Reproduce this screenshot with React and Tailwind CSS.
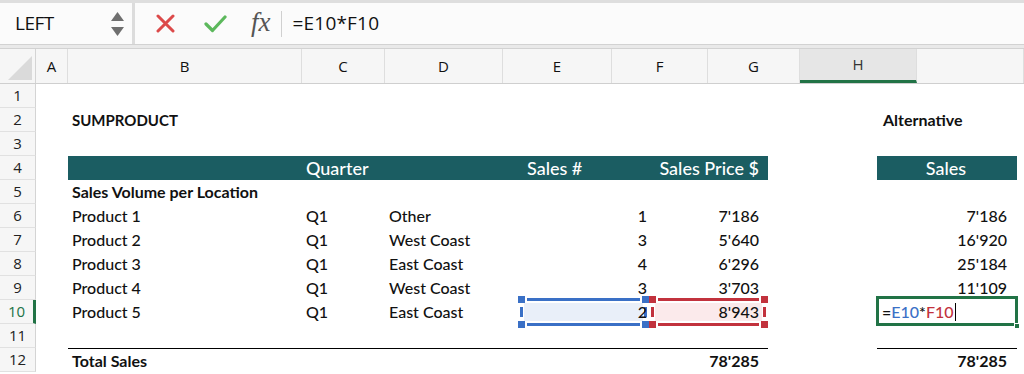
import React from 'react';

// column widths in the header strip (letters) and in the sheet body
const HEAD_COLS = [
  { id: 'A', w: 32 },
  { id: 'B', w: 234 },
  { id: 'C', w: 83 },
  { id: 'D', w: 118 },
  { id: 'E', w: 109 },
  { id: 'F', w: 96 },
  { id: 'G', w: 92 },
  { id: 'H', w: 117, active: true },
  { id: '', w: 107 },
];

const W = { A: 32, B: 234, C: 83, D: 133, E: 131, F: 119, G: 109, H: 140 };

const ROWS = [
  { n: 1 },
  { n: 2, B: { t: 'SUMPRODUCT', bold: true, cls: 'text-[15px]' }, alt: 'Alternative' },
  { n: 3 },
  { n: 4, header: true },
  { n: 5, B: { t: 'Sales Volume per Location', bold: true } },
  { n: 6, B: { t: 'Product 1' }, C: 'Q1', D: 'Other', E: '1', F: "7'186", H: "7'186" },
  { n: 7, B: { t: 'Product 2' }, C: 'Q1', D: 'West Coast', E: '3', F: "5'640", H: "16'920" },
  { n: 8, B: { t: 'Product 3' }, C: 'Q1', D: 'East Coast', E: '4', F: "6'296", H: "25'184" },
  { n: 9, B: { t: 'Product 4' }, C: 'Q1', D: 'West Coast', E: '3', F: "3'703", H: "11'109" },
  { n: 10, B: { t: 'Product 5' }, C: 'Q1', D: 'East Coast', E: '2', F: "8'943", edit: true },
  { n: 11 },
  { n: 12, total: true },
];

const body = { fontFamily: 'Lato, "Liberation Sans", sans-serif' };
const ui = { fontFamily: '"Open Sans", "Liberation Sans", sans-serif' };

function Handle({ className }) {
  return <span className={`absolute w-[7px] h-[7px] ${className}`} />;
}

function RefBox({ color, fill }) {
  // reference highlight drawn over a cell while editing a formula
  const bg = color === 'blue' ? 'bg-[#3a70c6]' : 'bg-[#c2323d]';
  return (
    <div className="absolute inset-x-0 top-[-4px] bottom-[-4px]">
      <div className={`absolute left-[9px] right-[9px] top-[2px] h-[3px] ${bg}`} />
      <div className={`absolute left-[9px] right-[9px] bottom-[2px] h-[3px] ${bg}`} />
      <div className={`absolute left-[2px] top-[11px] bottom-[11px] w-[3px] ${bg}`} />
      <div className={`absolute right-[2px] top-[11px] bottom-[11px] w-[3px] ${bg}`} />
      <div className={`absolute left-[6px] right-[6px] top-[7px] bottom-[7px] ${fill}`} />
      <Handle className={`${bg} left-0 top-0`} />
      <Handle className={`${bg} right-0 top-0`} />
      <Handle className={`${bg} left-0 bottom-0`} />
      <Handle className={`${bg} right-0 bottom-0`} />
    </div>
  );
}

function Cell({ w, children, className = '' }) {
  return (
    <div className={`shrink-0 h-full flex items-center whitespace-nowrap ${className}`} style={{ width: w }}>
      {children}
    </div>
  );
}

function SheetRow({ r }) {
  const active = r.n === 10;
  return (
    <div className="flex h-[24px]">
      <div
        className={`w-[36px] shrink-0 flex items-center justify-center border-b border-[#e1e1e1] bg-[#f6f6f6] text-[15px] font-medium ${active ? 'border-r-[3px] border-r-[#217346] text-[#217346] bg-[#ececec]' : 'border-r border-r-[#d4d4d4] text-[#222]'}`}
        style={ui}
      >
        {r.n}
      </div>
      <div className="flex flex-1 text-[16px] font-medium text-[#111]" style={body}>
        <Cell w={W.A} />
        {r.header ? (
          <>
            <div className="flex h-full bg-[#1b5d62] text-white text-[18px]">
              <Cell w={W.B} />
              <Cell w={W.C} className="pl-[4px]">Quarter</Cell>
              <Cell w={W.D} />
              <Cell w={W.E} className="pl-[9px]">Sales #</Cell>
              <Cell w={W.F} className="justify-end pr-[9px]">Sales Price $</Cell>
            </div>
            <Cell w={W.G} />
            <Cell w={W.H} className="bg-[#1b5d62] text-white text-[18px] justify-center pr-[2px]">Sales</Cell>
          </>
        ) : r.total ? (
          <>
            <div className="flex h-full border-t border-black font-bold">
              <Cell w={W.B} className="pl-[4px]">Total Sales</Cell>
              <Cell w={W.C} />
              <Cell w={W.D} />
              <Cell w={W.E} />
              <Cell w={W.F} className="justify-end pr-[9px]">78'285</Cell>
            </div>
            <Cell w={W.G} />
            <Cell w={W.H} className="border-t border-black font-bold justify-end pr-[10px]">78'285</Cell>
          </>
        ) : (
          <>
            <Cell w={W.B} className={`pl-[4px] ${r.B?.bold ? 'font-bold' : ''} ${r.B?.cls ?? ''}`}>
              {r.B?.t}
            </Cell>
            <Cell w={W.C} className="pl-[4px]">{r.C}</Cell>
            <Cell w={W.D} className="pl-[4px]">{r.D}</Cell>
            <Cell w={W.E} className="relative justify-end pr-[2px]">
              {r.edit && <RefBox color="blue" fill="bg-[#e9eff9]" />}
              <span className="relative">{r.E}</span>
            </Cell>
            <Cell w={W.F} className="relative justify-end pr-[9px]">
              {r.edit && <RefBox color="red" fill="bg-[#fbeaeb]" />}
              <span className="relative">{r.F}</span>
            </Cell>
            <Cell w={W.G} />
            {r.edit ? (
              <Cell w={W.H} className="relative">
                <div className="absolute left-[-1px] right-[-1px] top-[-4px] bottom-[-2px] border-[3px] border-[#217346]" />
                <span className="absolute right-[-3px] bottom-[-5px] w-[6px] h-[6px] bg-[#217346] border border-white" />
                <span className="relative pl-[5px] flex items-center">
                  <span>=</span>
                  <span className="text-[#3a70c6]">E10</span>
                  <span>*</span>
                  <span className="text-[#c2323d]">F10</span>
                  <span className="ml-[1px] w-px h-[18px] bg-black" />
                </span>
              </Cell>
            ) : r.alt ? (
              <Cell w={W.H} className="pl-[6px] font-bold text-[16px]">{r.alt}</Cell>
            ) : (
              <Cell w={W.H} className="justify-end pr-[10px]">{r.H}</Cell>
            )}
          </>
        )}
      </div>
    </div>
  );
}

export default function App() {
  return (
    <div className="w-[1024px] h-[374px] overflow-hidden bg-white">
      {/* Formula bar */}
      <div className="h-[44px] flex bg-[#fbfbfb] border-t-[3px] border-[#dedede]">
        <div
          className="w-[135px] shrink-0 flex items-center justify-between pl-[15px] pr-[8px] text-[19px] text-[#111] border-r-[3px] border-[#dcdcdc]"
          style={ui}
        >
          <span className="tracking-[-0.5px]">LEFT</span>
          <span className="flex flex-col gap-[6px]">
            <svg width="13" height="9" viewBox="0 0 13 9"><path d="M6.5 0 L13 9 L0 9 Z" fill="#6f6f6f" /></svg>
            <svg width="13" height="9" viewBox="0 0 13 9"><path d="M0 0 L13 0 L6.5 9 Z" fill="#6f6f6f" /></svg>
          </span>
        </div>
        <div className="flex items-center flex-1">
          <svg className="ml-[21px]" width="19" height="19" viewBox="0 0 19 19">
            <path d="M2 2 L17 17 M17 2 L2 17" stroke="#dc4a4a" strokeWidth="3" strokeLinecap="round" />
          </svg>
          <svg className="ml-[29px]" width="23" height="18" viewBox="0 0 23 18">
            <path d="M2 9 L8.5 15.5 L21 2" stroke="#5cb85c" strokeWidth="3.2" fill="none" strokeLinecap="round" strokeLinejoin="round" />
          </svg>
          <span
            className="ml-[24px] text-[27px] italic text-[#555] leading-none mt-[-3px]"
            style={{ fontFamily: '"Liberation Serif", "DejaVu Serif", serif' }}
          >
            fx
          </span>
          <span className="ml-[10px] w-px h-[26px] bg-[#d0d0d0]" />
          <span className="ml-[11px] text-[19px] text-[#111] tracking-[0.2px]" style={ui}>
            =E10*F10
          </span>
        </div>
      </div>
      <div className="h-[5px] bg-[#e9e9e9] border-y border-[#d2d2d2]" />

      {/* Column letters */}
      <div
        className="h-[35px] flex bg-[#f6f6f6] border-b border-[#cfcfcf] text-[15px] font-medium text-[#111]"
        style={ui}
      >
        <div className="w-[36px] shrink-0 relative border-r border-[#d4d4d4]">
          <svg className="absolute right-[3px] bottom-[3px]" width="24" height="24" viewBox="0 0 24 24">
            <path d="M24 0 L24 24 L0 24 Z" fill="#dadada" />
          </svg>
        </div>
        {HEAD_COLS.map((c, i) => (
          <div
            key={i}
            className={`shrink-0 flex items-center justify-center border-r border-[#dedede] ${c.active ? 'bg-[#e6e6e6] border-b-[3px] border-b-[#217346] text-[#333]' : ''}`}
            style={{ width: c.w }}
          >
            {c.id}
          </div>
        ))}
      </div>

      {/* Sheet body */}
      <div>
        {ROWS.map((r) => (
          <SheetRow key={r.n} r={r} />
        ))}
      </div>
    </div>
  );
}
